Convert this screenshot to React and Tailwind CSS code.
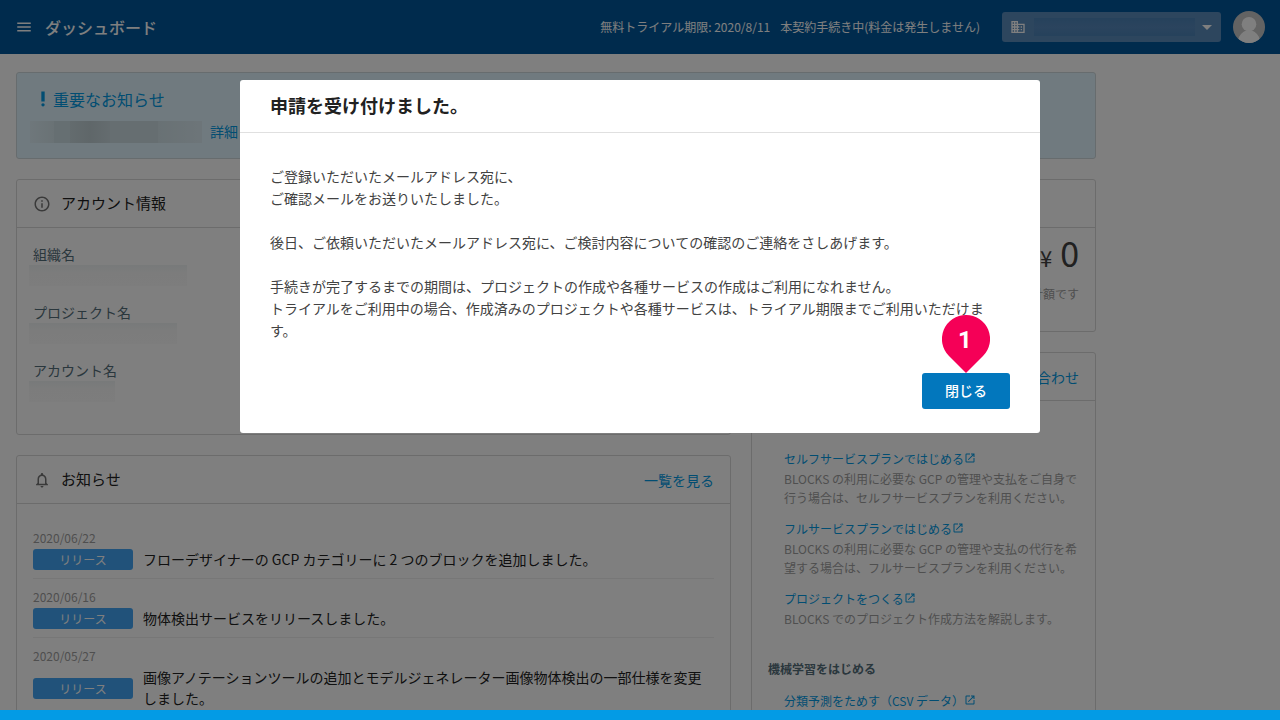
import React from 'react';
import {
  MdArrowDropDown,
  MdBusiness,
  MdInfoOutline,
  MdMenu,
  MdNotificationsNone,
  MdOpenInNew,
  MdPriorityHigh,
} from 'react-icons/md';

const news = [
  { date: '2020/06/22', tag: 'リリース', text: 'フローデザイナーの GCP カテゴリーに 2 つのブロックを追加しました。' },
  { date: '2020/06/16', tag: 'リリース', text: '物体検出サービスをリリースしました。' },
  { date: '2020/05/27', tag: 'リリース', text: '画像アノテーションツールの追加とモデルジェネレーター画像物体検出の一部仕様を変更しました。' },
];

const guides = [
  {
    title: 'セルフサービスプランではじめる',
    text: 'BLOCKS の利用に必要な GCP の管理や支払をご自身で行う場合は、セルフサービスプランを利用ください。',
  },
  {
    title: 'フルサービスプランではじめる',
    text: 'BLOCKS の利用に必要な GCP の管理や支払の代行を希望する場合は、フルサービスプランを利用ください。',
  },
  { title: 'プロジェクトをつくる', text: 'BLOCKS でのプロジェクト作成方法を解説します。' },
];

const account = [
  { label: '組織名', mask: 'w-[158px]' },
  { label: 'プロジェクト名', mask: 'w-[148px]' },
  { label: 'アカウント名', mask: 'w-[86px]' },
];

const Card = ({ className = '', children }) => (
  <section className={`rounded-[3px] border border-[#d8d8d8] bg-white ${className}`}>{children}</section>
);

const CardHeader = ({ icon, title, link }) => (
  <div className="flex h-12 items-center border-b border-[#d8d8d8] px-4">
    {icon}
    {title && <h2 className="ml-2.5 text-[15px] text-[#212121]">{title}</h2>}
    {link && (
      <a href="#" className="ml-auto text-sm text-[#039be5]">
        {link}
      </a>
    )}
  </div>
);

const GuideLink = ({ children }) => (
  <a href="#" className="flex items-start text-[#039be5]">
    {children}
    <MdOpenInNew className="mt-[3px] size-3" />
  </a>
);

const Header = () => (
  <header className="flex h-[54px] shrink-0 items-center bg-[#01579b] px-[15px] text-white">
    <button type="button" aria-label="メニュー">
      <MdMenu className="size-[18px]" />
    </button>
    <h1 className="ml-3 text-base font-medium">ダッシュボード</h1>
    <p className="ml-auto flex gap-2.5 text-xs">
      <span>無料トライアル期限: 2020/8/11</span>
      <span>本契約手続き中(料金は発生しません)</span>
    </p>
    <button
      type="button"
      aria-label="プロジェクトを選択"
      className="ml-[22px] flex h-[30px] w-[219px] items-center rounded-[3px] bg-[#5a8cbc] px-2"
    >
      <MdBusiness className="size-4" />
      <span className="mr-1 ml-2 h-[18px] flex-1 bg-linear-to-b from-[#4c84b8] via-[#5688bc] to-[#4c84b8]" />
      <MdArrowDropDown className="-mr-1.5 -ml-1 size-6" />
    </button>
    <svg viewBox="0 0 32 32" className="ml-3 size-8 rounded-full" role="img" aria-label="ユーザー">
      <rect width="32" height="32" fill="#c6c6c6" />
      <circle cx="16" cy="13.2" r="7.3" fill="#fff" />
      <path d="M5 29c1.500-5 4-8 8-9.500h6c4 1.500 6.500 4.500 8 9.500l-4 3H9z" fill="#fff" />
    </svg>
  </header>
);

const Notice = () => (
  <section className="h-[87px] rounded-[3px] border border-[#cfd8dc] bg-[#e1f5fe] px-[13px] pt-3.5">
    <h2 className="flex items-center pl-[3px] text-base leading-6 text-[#039be5]">
      <MdPriorityHigh className="size-5" />
      重要なお知らせ
    </h2>
    <div className="mt-2.5 flex items-start gap-2">
      <span className="flex h-[22px] w-[172px] bg-[#d2e2e8]">
        <span className="w-6 bg-linear-to-r from-[#deeff7] to-[#d4e5eb]" />
        <span className="w-4 bg-[#cddee4]" />
        <span className="w-10 bg-linear-to-r from-[#c8d8dd] via-[#bfced3] to-[#cad9df]" />
        <span className="w-12 bg-[#cddce2]" />
        <span className="flex-1 bg-linear-to-r from-[#d2e3e9] to-[#dbebf3]" />
      </span>
      <a href="#" className="text-sm leading-5 text-[#039be5]">
        詳細
      </a>
    </div>
  </section>
);

const Account = () => (
  <Card className="h-64">
    <CardHeader icon={<MdInfoOutline className="size-[18px] text-[#757575]" />} title="アカウント情報" />
    <dl className="px-4 pt-[15px]">
      {account.map((item) => (
        <div key={item.label} className="h-[58px]">
          <dt className="text-sm leading-[22px] text-[#546e7a]">{item.label}</dt>
          <dd className={`-ml-1 h-[21px] bg-linear-to-b from-[#f0f4f5] via-[#f9f9f9] via-40% to-[#fafafa] ${item.mask}`} />
        </div>
      ))}
    </dl>
  </Card>
);

const News = () => (
  <Card className="pb-4">
    <CardHeader
      icon={<MdNotificationsNone className="size-[18px] text-[#757575]" />}
      title="お知らせ"
      link="一覧を見る"
    />
    <ul className="px-4 pt-4">
      {news.map((item) => (
        <li key={item.date} className="border-b border-[#eee] py-2">
          <time className="mb-0.5 block text-xs leading-[19px] text-[#9e9e9e]">{item.date}</time>
          <div className="flex items-center gap-2.5">
            <span className="w-[100px] shrink-0 rounded-[3px] bg-[#42a5f5] text-center text-xs leading-[21px] text-white">
              {item.tag}
            </span>
            <p className="text-sm leading-[21px] text-[#212121]">{item.text}</p>
          </div>
        </li>
      ))}
    </ul>
  </Card>
);

const Guides = () => (
  <Card className="pb-4">
    <CardHeader link="問い合わせ" />
    <div className="px-4 pt-12 text-xs leading-[19px]">
      <ul className="flex flex-col gap-3 pl-4">
        {guides.map((item) => (
          <li key={item.title} className="flex flex-col gap-px">
            <GuideLink>{item.title}</GuideLink>
            <p className="text-[#9e9e9e]">{item.text}</p>
          </li>
        ))}
      </ul>
      <h3 className="mt-[31px] mb-[13px] font-bold text-[#546e7a]">機械学習をはじめる</h3>
      <div className="pl-4">
        <GuideLink>分類予測をためす（CSV データ）</GuideLink>
      </div>
    </div>
  </Card>
);

const Modal = () => (
  <div className="fixed inset-0 z-10 flex items-start justify-center bg-black/50 pt-20">
    <div role="dialog" aria-modal="true" aria-labelledby="modal-title" className="w-full max-w-[800px] rounded-[3px] bg-white">
      <h2
        id="modal-title"
        className="border-b border-[#e0e0e0] px-[30px] pb-0.5 text-lg leading-[50px] font-bold text-[#212121]"
      >
        申請を受け付けました。
      </h2>
      <div className="flex flex-col gap-[22px] px-[30px] pt-8 text-sm leading-[22px] text-[#424242]">
        <p>
          ご登録いただいたメールアドレス宛に、
          <br />
          ご確認メールをお送りいたしました。
        </p>
        <p>後日、ご依頼いただいたメールアドレス宛に、ご検討内容についての確認のご連絡をさしあげます。</p>
        <p>
          手続きが完了するまでの期間は、プロジェクトの作成や各種サービスの作成はご利用になれません。
          <br />
          トライアルをご利用中の場合、作成済みのプロジェクトや各種サービスは、トライアル期限までご利用いただけます。
        </p>
      </div>
      <div className="flex justify-end px-[30px] pt-8 pb-6">
        <div className="relative">
          <button type="button" className="h-9 w-[88px] rounded-[3px] bg-[#0277bd] pb-0.5 text-sm font-medium text-white">
            閉じる
          </button>
          {/* Номер шага над кнопкой */}
          <div className="absolute bottom-full left-5 h-[58px] w-12">
            <svg viewBox="0 0 48 58" className="absolute inset-0 size-full" aria-hidden="true">
              <path d="M24 0a24 24 0 0 1 17 41L24 58 7 41A24 24 0 0 1 24 0z" fill="#f50057" />
            </svg>
            <span className="relative mt-3 block pr-0.5 text-center font-[Roboto,sans-serif] text-2xl leading-[26px] font-bold text-white">
              1
            </span>
          </div>
        </div>
      </div>
    </div>
  </div>
);

const App = () => (
  <div
    lang="ja"
    className="flex h-screen flex-col overflow-hidden bg-white font-['Noto_Sans_CJK_JP',sans-serif] text-[#212121]"
  >
    <Header />
    <main className="min-h-0 flex-1 overflow-hidden px-4 pt-[18px]">
      <div className="flex max-w-[1080px] flex-col gap-5">
        <Notice />
        <div className="flex items-start gap-5">
          <div className="flex min-w-0 flex-1 flex-col gap-5">
            <Account />
            <News />
          </div>
          <div className="flex w-[345px] shrink-0 flex-col gap-5">
            <Card className="h-[153px]">
              <CardHeader />
              <div className="px-4 text-right">
                <p className="text-[34px] leading-[50px] text-[#424242]">
                  <span className="mr-2 text-[22px]">¥</span>0
                </p>
                <p className="mt-0.5 text-xs leading-5 text-[#9e9e9e]">合計額です</p>
              </div>
            </Card>
            <Guides />
          </div>
        </div>
      </div>
    </main>
    <footer className="z-20 h-2.5 shrink-0 bg-[#039be5]" />
    <Modal />
  </div>
);

export default App;
